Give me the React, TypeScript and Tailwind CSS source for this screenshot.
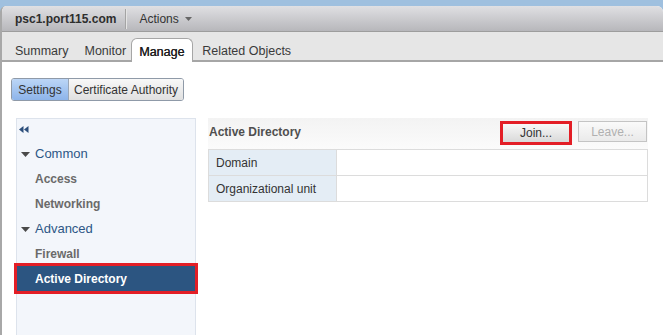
import React from "react";

const font = { fontFamily: '"Liberation Sans", Arial, sans-serif' };

function Caret() {
  return (
    <svg width="9" height="5" viewBox="0 0 9 5" className="block">
      <path d="M0 0 L9 0 L4.5 5 Z" fill="#4a4a4a" />
    </svg>
  );
}

function NavRow({ label }: { label: string }) {
  return (
    <div className="h-[25px] flex items-center pl-[18px] text-[12px] font-bold text-[#6a6a6a]">
      {label}
    </div>
  );
}

function NavGroup({ label }: { label: string }) {
  return (
    <div className="h-[25px] flex items-center pl-[4px]">
      <div className="w-[14px] flex items-center pt-[2px]">
        <Caret />
      </div>
      <span className="text-[13px] text-[#2d5686]">{label}</span>
    </div>
  );
}

export default function App() {
  return (
    <div
      className="w-[663px] h-[335px] overflow-hidden bg-[#9fc0df] pt-[6px]"
      style={font}
    >
      <div className="h-[329px] flex flex-col bg-white rounded-tl-[6px] rounded-tr-[6px] border-l-2 border-[#a8a8a8] overflow-hidden">
        {/* header */}
        <div className="h-[26px] shrink-0 flex items-center bg-gradient-to-b from-[#e0e0e3] to-[#b7b7bb] border-b border-[#9d9d9d] pl-[13px]">
          <span className="text-[12px] font-bold text-[#2e2e2e]">psc1.port115.com</span>
          <div className="ml-[9px] w-px h-[20px] bg-[#a4a4a4] shadow-[1px_0_0_#e4e4e4]" />
          <span className="ml-[13px] text-[12px] text-[#333]">Actions</span>
          <svg width="7" height="4" viewBox="0 0 7 4" className="ml-[6px] mt-[1px]">
            <path d="M0 0 L7 0 L3.5 4 Z" fill="#666" />
          </svg>
        </div>
        {/* tabs */}
        <div className="h-[30px] shrink-0 flex items-end bg-[#e6e6e6] border-b-2 border-[#a6a6a6] pl-[13px]">
          <div className="h-[24px] -mb-[2px] flex items-center pt-[2px] text-[12.5px] text-[#3a3a3a]">Summary</div>
          <div className="h-[24px] -mb-[2px] flex items-center pt-[2px] ml-[16px] text-[12.5px] text-[#3a3a3a]">Monitor</div>
          <div className="h-[24px] -mb-[2px] ml-[5px] w-[62px] flex items-center pl-[7px] pt-[3px] text-[12.5px] text-[#1e1e1e] bg-white border border-b-0 border-[#a6a6a6] rounded-t-[6px] [text-shadow:0.3px_0_0_#1e1e1e]">
            Manage
          </div>
          <div className="h-[24px] -mb-[2px] flex items-center pt-[2px] ml-[9px] text-[12.5px] text-[#3a3a3a]">Related Objects</div>
        </div>
        {/* body */}
        <div className="flex-1 flex flex-col pl-[9px] pt-[16px]">
          <div className="flex h-[23px] w-[173px] rounded-[3px] overflow-hidden border border-[#8f9aa8] text-[12px] text-[#333]">
            <div className="w-[57px] flex items-center justify-center bg-gradient-to-b from-[#bcd6f6] to-[#8db4ea] border-r border-[#9aa6b6]">
              Settings
            </div>
            <div className="flex-1 flex items-center justify-center bg-gradient-to-b from-[#f8f8f8] to-[#e0e0e0]">
              Certificate Authority
            </div>
          </div>
          <div className="flex mt-[17px] ml-[5px] flex-1">
            {/* nav */}
            <div className="w-[180px] bg-[#f3f6fb] border border-b-0 border-[#dde3ec] flex flex-col">
              <div className="h-[22px] flex items-center pl-[2px]">
                <svg width="10" height="7" viewBox="0 0 10 7" className="block mt-[-2px]">
                  <path d="M0 3.5 L4.5 0 L4.5 7 Z" fill="#2d4f7c" />
                  <path d="M5 3.5 L9.5 0 L9.5 7 Z" fill="#2d4f7c" />
                </svg>
              </div>
              <NavGroup label="Common" />
              <NavRow label="Access" />
              <NavRow label="Networking" />
              <NavGroup label="Advanced" />
              <NavRow label="Firewall" />
              <div className="h-[25px] flex items-center pl-[18px] text-[12px] font-bold text-white bg-[#2c5581] outline outline-[3px] outline-[#e31e26]">
                Active Directory
              </div>
            </div>
            {/* right */}
            <div className="ml-[12px] w-[440px] flex flex-col">
              <div className="h-[31px] flex items-start bg-gradient-to-b from-[#f3f3f3] to-[#fbfbfb]">
                <div className="pl-[1px] pt-[5px] text-[12px] font-bold text-[#4f4f4f]">Active Directory</div>
                <div className="flex-1" />
                <div className="mt-[6px] w-[66px] h-[18px] flex items-center justify-center text-[12px] text-[#333] bg-gradient-to-b from-[#f8f8f8] to-[#d9d9d9] outline outline-[3px] outline-[#e31e26]">
                  Join...
                </div>
                <div className="ml-[9px] mr-[1px] mt-[3px] w-[69px] h-[21px] flex items-center justify-center text-[12px] text-[#b0b0b0] bg-gradient-to-b from-[#fafafa] to-[#eaeaea] border border-[#c4c4c4]">
                  Leave...
                </div>
              </div>
              <div className="border border-[#dcdcdc] flex flex-col">
                <div className="h-[26px] flex border-b border-[#dcdcdc]">
                  <div className="w-[128px] bg-[#e4edf5] flex items-center pl-[7px] text-[12px] text-[#333] border-r border-[#dcdcdc]">
                    Domain
                  </div>
                  <div className="flex-1" />
                </div>
                <div className="h-[25px] flex">
                  <div className="w-[128px] bg-[#e4edf5] flex items-center pl-[7px] text-[12px] text-[#333] border-r border-[#dcdcdc]">
                    Organizational unit
                  </div>
                  <div className="flex-1" />
                </div>
              </div>
            </div>
          </div>
        </div>
      </div>
    </div>
  );
}
